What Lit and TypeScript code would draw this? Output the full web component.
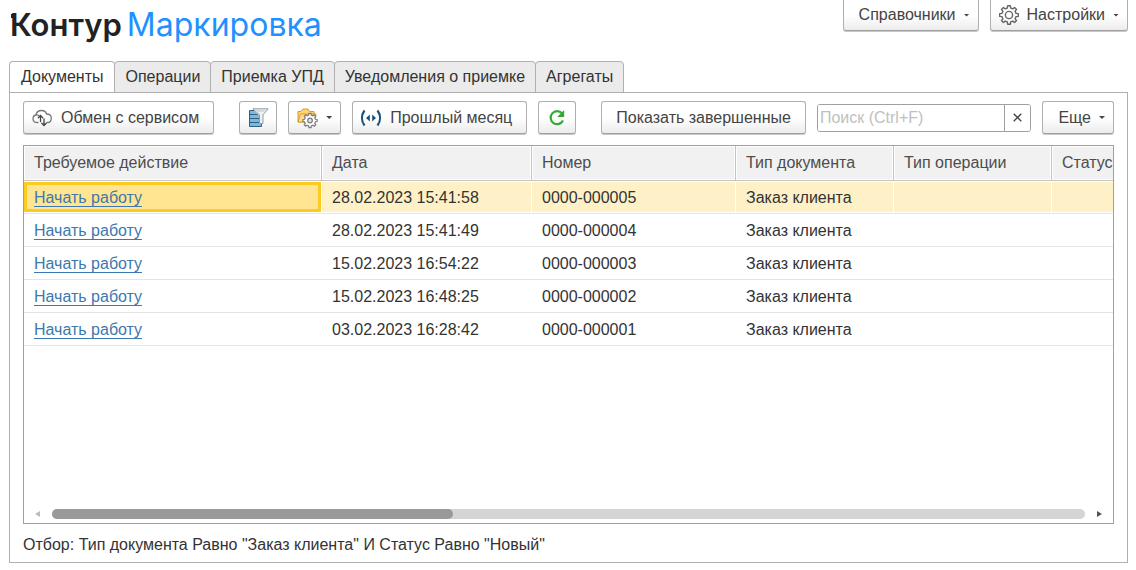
import { LitElement, html, css, svg } from "lit";
import { customElement, property, state } from "lit/decorators.js";
import { classMap } from "lit/directives/class-map.js";

interface Row {
  date: string;
  number: string;
  type: string;
}

const COLUMNS = ["Требуемое действие", "Дата", "Номер", "Тип документа", "Тип операции", "Статус"];
const TABS = ["Документы", "Операции", "Приемка УПД", "Уведомления о приемке", "Агрегаты"];
const ROWS: Row[] = [
  { date: "28.02.2023 15:41:58", number: "0000-000005", type: "Заказ клиента" },
  { date: "28.02.2023 15:41:49", number: "0000-000004", type: "Заказ клиента" },
  { date: "15.02.2023 16:54:22", number: "0000-000003", type: "Заказ клиента" },
  { date: "15.02.2023 16:48:25", number: "0000-000002", type: "Заказ клиента" },
  { date: "03.02.2023 16:28:42", number: "0000-000001", type: "Заказ клиента" },
];

// Outline of a gear with flat teeth, centred on (cx, cy).
function gearPath(cx: number, cy: number, outer: number, inner: number, teeth = 8): string {
  const points: string[] = [];
  const step = (Math.PI * 2) / teeth;
  for (let i = 0; i < teeth; i++) {
    const a = i * step - Math.PI / 2;
    for (const [r, d] of [[inner, -0.29], [outer, -0.19], [outer, 0.19], [inner, 0.29]]) {
      points.push(`${(cx + r * Math.cos(a + d * step)).toFixed(2)} ${(cy + r * Math.sin(a + d * step)).toFixed(2)}`);
    }
  }
  return `M${points.join("L")}Z`;
}

const ICONS = {
  gear: svg`<g fill="none" stroke="#666" stroke-width="1.4" stroke-linejoin="round">
    <path d=${gearPath(10, 10, 9.4, 7.2)} /><circle cx="10" cy="10" r="3.6" /></g>`,
  cloud: svg`<g fill="none" stroke="#777" stroke-width="1.3" stroke-linecap="round">
    <path d="M6 14.500H4.600A3.800 3.800 0 0 1 4 7C4.500 4 7 2.500 9.500 2.500c2.700 0 4.500 1.500 5.100 3.500C17.400 5.800 19.300 7.700 19.300 10.200c0 2.500-1.700 4.300-4 4.300H15" />
    <path d="M4 7c1-.3 2-.1 2.800.5" />
    <path stroke="#444" d="M8.500 13.500V7.500M6.300 9.700 8.500 7.500l2.200 2.200M12 11V17.500M9.800 15.300 12 17.500l2.200-2.200" /></g>`,
  filter: svg`<g><path d="M1.500 2.500h12v16h-12z" fill="#86b5da" stroke="#2a6188" />
    <path d="M1.500 6.500h12M1.500 10.500h12M1.500 14.500h12" stroke="#2a6188" />
    <path d="M3.800 0h17.200L16 6.500V16h-5V7.500z" fill="#fff" />
    <path d="M4.800.8h15.400L15 6.800v8.700h-3.500V6.800z" fill="#eef0f2" stroke="#929aa2" />
    <path d="M7 1.500h11l-2 2.300H9z" fill="#d3d8dc" /></g>`,
  folder: svg`<g><path d="M1 14V3.500h3L6 1h5l1.500 2.500H17V14z" fill="#ffd56b" stroke="#d99a2b" />
    <path d="M1 14 3.500 6H19l-2 8z" fill="#ffe08c" stroke="#d99a2b" />
    <path d=${gearPath(13, 12.5, 7.2, 5.6)} fill="#fff" stroke="#7c7c7c" stroke-width="1.2" />
    <circle cx="13" cy="12.500" r="2.300" fill="#e2e2e2" stroke="#7c7c7c" stroke-width="1.2" /></g>`,
  period: svg`<g><path d="M3.500 2.500C.2 7 .2 13 3.500 17.500M16.500 2.500c3.300 4.500 3.300 10.500 0 15" fill="none" stroke="#17517c" stroke-width="2.200" />
    <path d="M8.800 6.500v7L5 10zM11.200 6.500v7l3.800-3.500z" fill="#17517c" /></g>`,
  refresh: svg`<g><path d="M15 5.300A6.500 6.500 0 1 0 16 12.500" fill="none" stroke="#36a836" stroke-width="2.200" />
    <path d="M17.200 2V9H10.200z" fill="#36a836" /></g>`,
};

@customElement("tool-icon")
export class ToolIcon extends LitElement {
  static styles = css`
    :host { display: block; flex: none; width: 20px; height: 20px; }
    .glyph { display: block; width: 100%; height: 100%; overflow: visible; }
  `;
  @property() name: keyof typeof ICONS = "gear";
  render() {
    return html`<svg class="glyph" viewBox="0 0 20 20" aria-hidden="true">${ICONS[this.name]}</svg>`;
  }
}

@customElement("app-root")
export class AppRoot extends LitElement {
  static styles = css`
    :host {
      display: flex;
      flex-direction: column;
      box-sizing: border-box;
      min-height: 100vh;
      padding: 0 8px 7px 9px;
      background: #fff;
      color: #333;
      font: 16px/20px "Liberation Sans", Arial, sans-serif;
    }
    * { box-sizing: border-box; }
    button, input { font: inherit; margin: 0; }

    .header { display: flex; align-items: flex-start; justify-content: space-between; height: 61px; }
    .logo {
      display: flex;
      align-items: baseline;
      gap: 5px;
      margin: 0;
      padding: 5px 0 0 1px;
      font: 400 32px/40px Inter, sans-serif;
      color: #2291ff;
      white-space: nowrap;
    }
    .brand { position: relative; font-size: 31px; font-weight: 600; color: #222; }
    .brand::before {
      content: "";
      position: absolute;
      left: 1px;
      top: 9px;
      width: 5px;
      height: 4px;
      background: #222;
    }
    .menus { display: flex; gap: 11px; }

    .button {
      display: flex;
      align-items: center;
      flex: none;
      height: 33px;
      padding: 0 14px;
      border: 1px solid #b0b0b0;
      border-bottom-color: #a0a0a0;
      border-radius: 3px;
      background: linear-gradient(#fff 50%, #ececec);
      box-shadow: 0 1px #c8c8c8;
      color: #444;
      white-space: nowrap;
      cursor: pointer;
    }
    .button.icon { padding: 0 8px; }
    .button.with-icon { padding-left: 8px; gap: 9px; }
    .button.menu { padding: 0 8px 0 15px; }
    .button.with-icon.menu { padding-left: 8px; gap: 8px; }
    .menus .button { height: 31px; border-top: 0; border-radius: 0 0 3px 3px; }
    .caret {
      width: 6px;
      height: 3px;
      margin-left: 8px;
      background: #444;
      clip-path: polygon(0 0, 100% 0, 50% 100%);
    }
    .icon .caret { margin-left: 9px; }
    .with-icon .caret { margin-left: 0; }

    .tabs { display: flex; height: 32px; margin-bottom: -1px; }
    .tab {
      padding: 0 10px;
      border: 1px solid #b0b0b0;
      border-radius: 4px 4px 0 0;
      background: #ebebeb;
      color: #333;
      white-space: nowrap;
    }
    .tab + .tab { margin-left: -1px; }
    .tab.active { padding: 0 11px; background: #fff; border-bottom-color: #fff; }

    .panel {
      display: flex;
      flex-direction: column;
      flex: 1;
      padding: 8px 13px;
      border: 1px solid #b0b0b0;
    }
    .toolbar { display: flex; align-items: center; gap: 11px; margin-bottom: 11px; }
    .group { display: flex; gap: 11px; margin-right: 14px; }
    .search {
      display: flex;
      flex: 1;
      min-width: 120px;
      height: 28px;
      border: 1px solid #a0a0a0;
      border-radius: 3px;
      overflow: hidden;
    }
    .field { flex: 1; min-width: 0; padding: 0 2px; border: 0; outline: 0; background: #fff; color: #333; }
    .field::placeholder { color: #bfbfbf; opacity: 1; }
    .clear {
      display: grid;
      place-items: center;
      width: 26px;
      padding: 0;
      border: 0;
      border-left: 1px solid #a0a0a0;
      background: #fff;
    }

    .list {
      display: flex;
      flex-direction: column;
      flex: 1;
      border: 1px solid #a0a0a0;
      overflow: hidden;
    }
    .viewport { flex: 1; overflow: hidden; }
    .table { width: 100%; min-width: 1090px; table-layout: fixed; border-collapse: separate; border-spacing: 0; }
    .col-action { width: 298px; }
    .col-date { width: 210px; }
    .col-number { width: 204px; }
    .col-type, .col-operation { width: 158px; }
    .head, .cell { padding: 0 10px; text-align: left; font-weight: 400; white-space: nowrap; }
    .head {
      height: 35px;
      border-right: 1px solid #c4c4c4;
      border-bottom: 1px solid #c4c4c4;
      background: #f1f1f1;
      box-shadow: inset 0 0 0 1px #fff;
      color: #4d4d4d;
    }
    .cell { height: 33px; padding-top: 2px; border-bottom: 1px solid #e4e4e4; }
    .selected .cell { background: #fef1c8; border-right: 1px solid #fff; box-shadow: inset 0 1px #fff, inset 0 -1px #fff; }
    .selected .cell.current { background: #ffe591; box-shadow: inset 0 1px #fff, inset 0 -1px #fff, inset 0 0 0 3px #fbcb1f, inset 0 4px #fbcb1f, inset 0 -4px #fbcb1f; }
    .head:last-child, .selected .cell:last-child { border-right: 0; }
    .head:last-child { padding-right: 0; }
    .link { color: #3d78ae; text-decoration: none; border-bottom: 1px solid #3d78ae; }

    .scrollbar { display: flex; align-items: center; gap: 12px; height: 18px; padding: 0 11px; }
    .arrow { width: 5px; height: 6px; background: #555; clip-path: polygon(0 0, 100% 50%, 0 100%); }
    .arrow.back { background: #bbb; clip-path: polygon(100% 0, 0 50%, 100% 100%); }
    .track { flex: 1; height: 10px; border-radius: 5px; background: #d5d5d5; }
    .thumb { height: 100%; border-radius: 5px; background: #999; }
    .selection { margin: 0; padding: 11px 0 0; height: 30px; }
  `;

  @state() private tab = 0;
  @state() private row = 0;
  @state() private query = "";
  private scrollShare = 38.8;

  render() {
    return html`
      <header class="header">
        <h1 class="logo"><span class="brand">Контур</span><span>Маркировка</span></h1>
        <nav class="menus">
          <button class="button menu">Справочники<span class="caret"></span></button>
          <button class="button with-icon menu"><tool-icon name="gear"></tool-icon>Настройки<span class="caret"></span></button>
        </nav>
      </header>
      <div class="tabs" role="tablist">
        ${TABS.map((label, i) => html`<button
          class=${classMap({ tab: true, active: i === this.tab })}
          role="tab"
          aria-selected=${i === this.tab}
          @click=${() => (this.tab = i)}
        >${label}</button>`)}
      </div>
      <main class="panel">
        <div class="toolbar">
          <div class="group">
            <button class="button with-icon"><tool-icon name="cloud"></tool-icon>Обмен с сервисом</button>
          </div>
          <div class="group">
            <button class="button icon" aria-label="Фильтр"><tool-icon name="filter"></tool-icon></button>
            <button class="button icon" aria-label="Папка"><tool-icon name="folder"></tool-icon><span class="caret"></span></button>
            <button class="button with-icon"><tool-icon name="period"></tool-icon>Прошлый месяц</button>
            <button class="button icon" aria-label="Обновить"><tool-icon name="refresh"></tool-icon></button>
          </div>
          <button class="button">Показать завершенные</button>
          <div class="search">
            <input class="field" type="text" aria-label="Поиск" placeholder="Поиск (Ctrl+F)" .value=${this.query}
              @input=${(e: Event) => (this.query = (e.target as HTMLInputElement).value)} />
            <button class="clear" aria-label="Очистить" @click=${() => (this.query = "")}>
              <svg width="9" height="9" viewBox="0 0 9 9"><path d="M.7.7l7.600 7.600M8.300.7.7 8.300" stroke="#444" stroke-width="1.300" /></svg>
            </button>
          </div>
          <button class="button menu">Еще<span class="caret"></span></button>
        </div>
        <section class="list">
          <div class="viewport">
            <table class="table">
              <colgroup>
                <col class="col-action" /><col class="col-date" /><col class="col-number" />
                <col class="col-type" /><col class="col-operation" /><col />
              </colgroup>
              <thead>
                <tr>${COLUMNS.map((c) => html`<th class="head" scope="col">${c}</th>`)}</tr>
              </thead>
              <tbody>
                ${ROWS.map((r, i) => html`<tr class=${classMap({ selected: i === this.row })} @click=${() => (this.row = i)}>
                  <td class="cell current"><a class="link" href="#">Начать работу</a></td>
                  <td class="cell">${r.date}</td>
                  <td class="cell">${r.number}</td>
                  <td class="cell">${r.type}</td>
                  <td class="cell"></td>
                  <td class="cell"></td>
                </tr>`)}
              </tbody>
            </table>
          </div>
          <div class="scrollbar">
            <span class="arrow back"></span>
            <div class="track"><div class="thumb" style="width:${this.scrollShare}%"></div></div>
            <span class="arrow"></span>
          </div>
        </section>
        <p class="selection">Отбор: Тип документа Равно "Заказ клиента" И Статус Равно "Новый"</p>
      </main>
    `;
  }
}
